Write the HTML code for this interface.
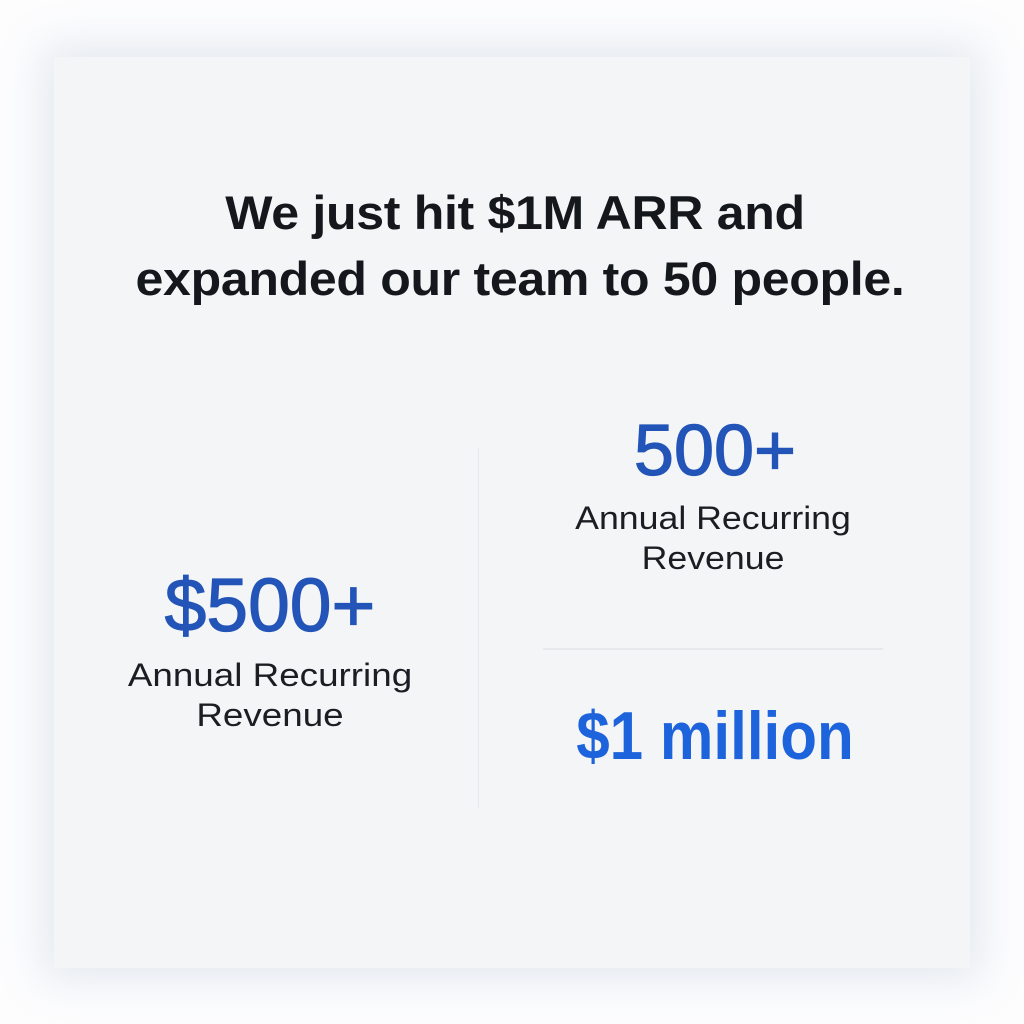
<!DOCTYPE html>
<html><head><meta charset="utf-8"><style>
html,body{margin:0;padding:0;width:1024px;height:1024px;background:#fdfdfe;overflow:hidden;font-family:"Liberation Sans",sans-serif;}
.card{position:absolute;left:54px;top:57px;width:916px;height:911px;background:#f4f5f7;box-shadow:0 0 40px 12px rgba(200,210,225,0.45);}
.t{position:absolute;left:0;width:1024px;text-align:center;white-space:nowrap;}
.h{font-size:47px;font-weight:bold;color:#14171c;letter-spacing:-0.3px;}
.lab{font-size:32px;color:#1a1d22;}
.big{color:#2354b8;-webkit-text-stroke:1.2px #2354b8;}
</style></head><body>
<div class="card"></div>
<div class="t h" style="top:185px;left:3px;transform:scaleX(1.065)">We just hit $1M ARR and</div>
<div class="t h" style="top:251px;left:8px;transform:scaleX(1.065)">expanded our team to 50 people.</div>
<div style="position:absolute;left:478px;top:448px;width:1px;height:360px;background:#e6e8ec"></div>
<div style="position:absolute;left:543px;top:648px;width:340px;height:2px;background:#e6e8ec"></div>
<div class="t big" style="left:-242px;top:562px;font-size:75px;">$500+</div>
<div class="t lab" style="left:-242px;top:657px;transform:scaleX(1.15)">Annual Recurring</div>
<div class="t lab" style="left:-242px;top:697px;transform:scaleX(1.15)">Revenue</div>
<div class="t big" style="left:203px;top:410px;font-size:72px;">500+</div>
<div class="t lab" style="left:201px;top:500px;transform:scaleX(1.115)">Annual Recurring</div>
<div class="t lab" style="left:201px;top:540px;transform:scaleX(1.115)">Revenue</div>
<div class="t" style="left:203px;top:697px;font-size:68px;font-weight:bold;color:#1d63dc;transform:scaleX(0.885)">$1 million</div>
</body></html>
